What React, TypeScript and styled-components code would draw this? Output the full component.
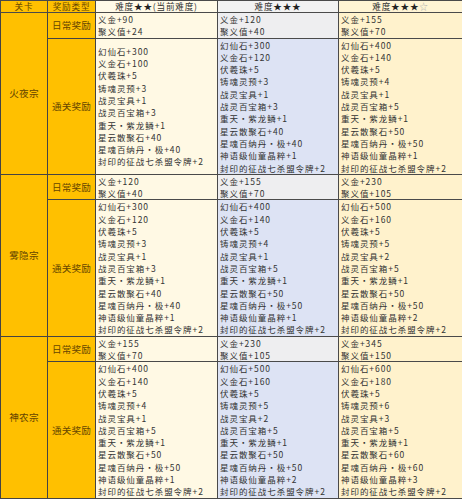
import React from 'react'
import styled, { createGlobalStyle } from 'styled-components'

type Tone = 'cream' | 'grey' | 'blue' | 'yellow'

const GlobalStyle = createGlobalStyle`
  body {
    margin: 0;
    background: #fff;
    font-family: "Noto Sans CJK SC", "Noto Sans", sans-serif;
  }
`

const tones: Record<Tone, string> = {
  cream: '#fff9e4',
  grey: '#eeeef0',
  blue: '#dde3f4',
  yellow: '#fff2cc',
}

const headTones: Record<Tone, string> = {
  cream: '#fffae8',
  grey: '#f2f2f2',
  blue: '#f2f2f2',
  yellow: '#fff4d4',
}

const Table = styled.table`
  width: 462px;
  border-collapse: collapse;
  table-layout: fixed;
  color: #333;
`

const HeadRow = styled.tr`
  height: 12px;
`

const DailyRow = styled.tr`
  height: 24px;
`

const ClearRow = styled.tr`
  height: 135px;
`

const Head = styled.th<{ $tone?: Tone }>`
  padding: 0;
  font-weight: normal;
  font-size: 8.6px;
  letter-spacing: 0.8px;
  line-height: 11px;
  text-align: center;
  white-space: nowrap;
  background: ${(p) => (p.$tone ? headTones[p.$tone] : '#ffc000')};
  color: ${(p) => (p.$tone ? '#333' : '#654600')};
  border: 1px solid #4a4a4a;
`

const Label = styled.td`
  padding: 0;
  background: #ffc000;
  color: #654600;
  text-align: center;
  vertical-align: middle;
  font-size: 9.6px;
  letter-spacing: 0.2px;
  border: 1px solid #444;
`

const Reward = styled.td<{ $tone: Tone }>`
  padding: 0 0 0 2px;
  background: ${(p) => tones[p.$tone]};
  vertical-align: middle;
  font-size: 8.5px;
  letter-spacing: 0.95px;
  line-height: 12.3px;
  white-space: nowrap;
  overflow: hidden;
  border: 1px solid #4a4a4a;
`

const Star = styled.span<{ $hollow?: boolean }>`
  color: ${(p) => (p.$hollow ? '#b0b0b0' : '#222')};
`

const Line = styled.div``

const names = ['幻仙石', '义金石', '伏羲珠', '铸魂灵预', '战灵宝具', '战灵百宝箱', '重天·紫龙鳞', '星云散聚石', '星魂百纳丹·极', '神语级仙童晶粹', '封印的征战七杀盟令牌']

const clear = (counts: (number | null)[]) =>
  counts.flatMap((n, i) => (n === null ? [] : [`${names[i]}+${n}`]))

const daily = (gold: number, merit: number) => [`义金+${gold}`, `聚义值+${merit}`]

const sections = [
  {
    name: '火夜宗',
    daily: [daily(90, 24), daily(120, 40), daily(155, 70)],
    clear: [
      clear([300, 100, 5, 3, 1, 3, 1, 40, 40, null, 2]),
      clear([300, 120, 5, 3, 1, 3, 1, 40, 40, 1, 2]),
      clear([400, 140, 5, 4, 1, 5, 1, 50, 50, 1, 2]),
    ],
  },
  {
    name: '雾隐宗',
    daily: [daily(120, 40), daily(155, 70), daily(230, 105)],
    clear: [
      clear([300, 120, 5, 3, 1, 3, 1, 40, 40, 1, 2]),
      clear([400, 140, 5, 4, 1, 5, 1, 50, 50, 1, 2]),
      clear([500, 160, 5, 5, 2, 5, 1, 50, 50, 2, 2]),
    ],
  },
  {
    name: '神农宗',
    daily: [daily(155, 70), daily(230, 105), daily(345, 150)],
    clear: [
      clear([400, 140, 5, 4, 1, 5, 1, 50, 50, 1, 2]),
      clear([500, 160, 5, 5, 2, 5, 1, 50, 50, 2, 2]),
      clear([600, 180, 5, 6, 3, 5, 1, 60, 60, 3, 2]),
    ],
  },
]

const dailyTones: Tone[] = ['cream', 'grey', 'yellow']
const clearTones: Tone[] = ['cream', 'blue', 'yellow']

const Lines = ({ items }: { items: string[] }) => (
  <>
    {items.map((t) => (
      <Line key={t}>{t}</Line>
    ))}
  </>
)

export default function App() {
  return (
    <>
      <GlobalStyle />
      <Table>
        <colgroup>
          <col style={{ width: 47 }} />
          <col style={{ width: 48 }} />
          <col style={{ width: 122 }} />
          <col style={{ width: 121 }} />
          <col style={{ width: 124 }} />
        </colgroup>
        <thead>
          <HeadRow>
            <Head>关卡</Head>
            <Head>奖励类型</Head>
            <Head $tone="cream">
              难度<Star>★★</Star>(当前难度)
            </Head>
            <Head $tone="grey">
              难度<Star>★★★</Star>
            </Head>
            <Head $tone="yellow">
              难度<Star>★★★</Star>
              <Star $hollow>☆</Star>
            </Head>
          </HeadRow>
        </thead>
        <tbody>
          {sections.map((s) => (
            <React.Fragment key={s.name}>
              <DailyRow>
                <Label rowSpan={2}>{s.name}</Label>
                <Label>日常奖励</Label>
                {s.daily.map((items, i) => (
                  <Reward key={i} $tone={dailyTones[i]}>
                    <Lines items={items} />
                  </Reward>
                ))}
              </DailyRow>
              <ClearRow>
                <Label>通关奖励</Label>
                {s.clear.map((items, i) => (
                  <Reward key={i} $tone={clearTones[i]}>
                    <Lines items={items} />
                  </Reward>
                ))}
              </ClearRow>
            </React.Fragment>
          ))}
        </tbody>
      </Table>
    </>
  )
}
